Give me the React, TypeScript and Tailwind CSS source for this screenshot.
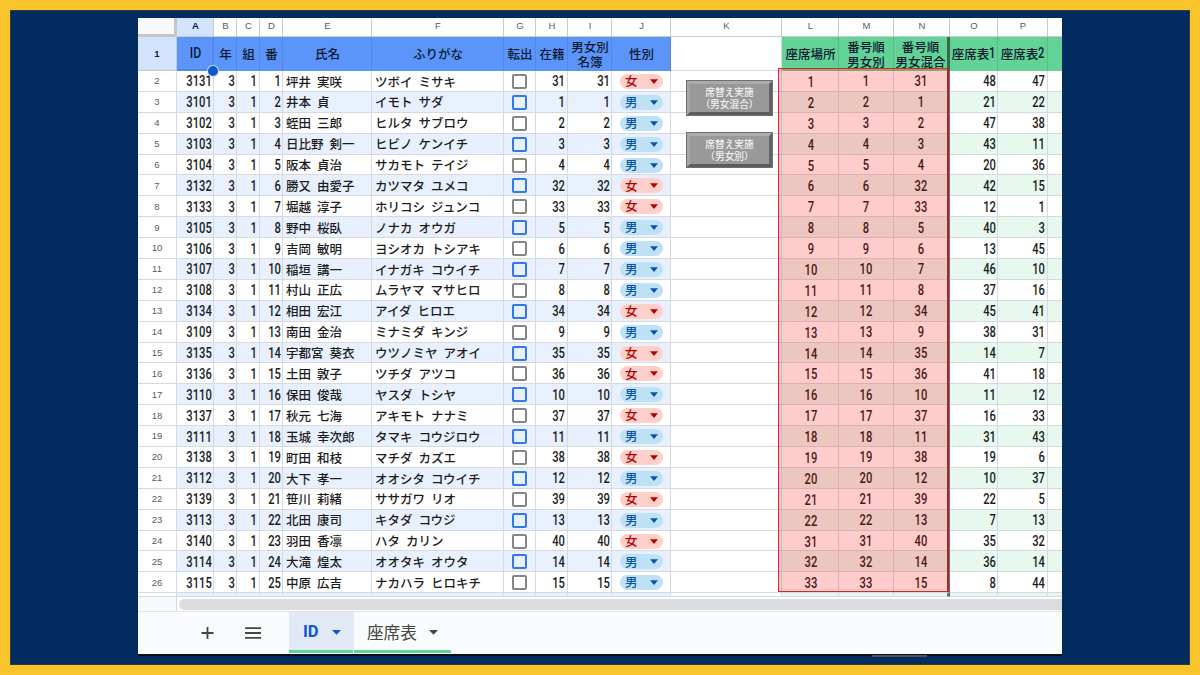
import type { ReactNode } from "react";
import clsx from "clsx";

type Student = [id: number, name: string, kana: string, no: number, sex: "男" | "女", seat1: number, seat2: number];

const STUDENTS: Student[] = [
  [3131, "坪井 実咲", "ツボイ ミサキ", 31, "女", 48, 47],
  [3101, "井本 貞", "イモト サダ", 1, "男", 21, 22],
  [3102, "蛭田 三郎", "ヒルタ サブロウ", 2, "男", 47, 38],
  [3103, "日比野 剣一", "ヒビノ ケンイチ", 3, "男", 43, 11],
  [3104, "阪本 貞治", "サカモト テイジ", 4, "男", 20, 36],
  [3132, "勝又 由愛子", "カツマタ ユメコ", 32, "女", 42, 15],
  [3133, "堀越 淳子", "ホリコシ ジュンコ", 33, "女", 12, 1],
  [3105, "野中 桜臥", "ノナカ オウガ", 5, "男", 40, 3],
  [3106, "吉岡 敏明", "ヨシオカ トシアキ", 6, "男", 13, 45],
  [3107, "稲垣 講一", "イナガキ コウイチ", 7, "男", 46, 10],
  [3108, "村山 正広", "ムラヤマ マサヒロ", 8, "男", 37, 16],
  [3134, "相田 宏江", "アイダ ヒロエ", 34, "女", 45, 41],
  [3109, "南田 金治", "ミナミダ キンジ", 9, "男", 38, 31],
  [3135, "宇都宮 葵衣", "ウツノミヤ アオイ", 35, "女", 14, 7],
  [3136, "土田 敦子", "ツチダ アツコ", 36, "女", 41, 18],
  [3110, "保田 俊哉", "ヤスダ トシヤ", 10, "男", 11, 12],
  [3137, "秋元 七海", "アキモト ナナミ", 37, "女", 16, 33],
  [3111, "玉城 幸次郎", "タマキ コウジロウ", 11, "男", 31, 43],
  [3138, "町田 和枝", "マチダ カズエ", 38, "女", 19, 6],
  [3112, "大下 孝一", "オオシタ コウイチ", 12, "男", 10, 37],
  [3139, "笹川 莉緒", "ササガワ リオ", 39, "女", 22, 5],
  [3113, "北田 康司", "キタダ コウジ", 13, "男", 7, 13],
  [3140, "羽田 香凛", "ハタ カリン", 40, "女", 35, 32],
  [3114, "大滝 煌太", "オオタキ オウタ", 14, "男", 36, 14],
  [3115, "中原 広吉", "ナカハラ ヒロキチ", 15, "男", 8, 44],
];

const COLUMNS = "ABCDEFGHIJKLMNOP".split("");

const GRID =
  "grid grid-cols-[39px_37px_23px_23px_23px_89px_132px_32px_32px_44px_59px_111px_57px_55px_56px_48px_50px_14px]";

// Place number shown in the seat columns; the last seats skip to the 30s
const seatNo = (i: number) => (i < 22 ? i + 1 : i + 9);

function Num({ children, align = "right" }: { children: ReactNode; align?: "right" | "center" | "left" }) {
  return (
    <span
      className={clsx(
        "inline-block scale-x-[0.8] font-['Roboto',sans-serif] text-[14px] font-medium",
        align === "right" && "origin-right",
        align === "center" && "origin-center",
        align === "left" && "-mr-[2px] origin-left"
      )}
    >
      {children}
    </span>
  );
}

function Cell({ children, className }: { children?: ReactNode; className?: string }) {
  return (
    <div className={clsx("flex items-center overflow-hidden border-r border-b border-[#d5d9e0] whitespace-pre", className)}>
      {children}
    </div>
  );
}

function Chip({ sex }: { sex: "男" | "女" }) {
  return (
    <span
      className={clsx(
        "flex h-[15px] w-[43px] items-center justify-between rounded-full px-[5px]",
        sex === "女" ? "bg-[#ffcfc9] text-[#b10202]" : "bg-[#bfe1f6] text-[#0a53a8]"
      )}
    >
      {sex}
      <svg width="8" height="5" viewBox="0 0 8 5" fill="currentColor"><path d="M0 0.2h8L4 4.9z" /></svg>
    </span>
  );
}

function HeaderCell({ children, green, className }: { children?: ReactNode; green?: boolean; className?: string }) {
  return (
    <div
      className={clsx(
        "flex items-center justify-center overflow-hidden border-r text-center leading-[15.5px] whitespace-pre text-[#0b1a30]",
        green ? "border-[#58bd88] bg-[#63d297]" : "border-[#5288e6] bg-[#5b95f9]",
        className
      )}
    >
      {children}
    </div>
  );
}

function BevelButton({ lines }: { lines: [string, string] }) {
  return (
    <button className="flex h-[36px] w-[87px] flex-col items-center justify-center border-4 border-t-[#acacac] border-r-[#636363] border-b-[#5c5c5c] border-l-[#a6a6a6] bg-[#999999] text-[9.7px] leading-[12px] font-medium whitespace-nowrap text-[#f0f0f0] outline-1 -outline-offset-1 outline-[#707070]">
      <span>{lines[0]}</span>
      <span>{lines[1]}</span>
    </button>
  );
}

export default function App() {
  return (
    <div className="h-[675px] w-[1200px] overflow-hidden border-10 border-[#f8c32b] bg-[#022b60] font-['Noto_Sans_CJK_JP',sans-serif] text-[12.5px] font-medium text-[#1c1c1c]">
      <div className="h-full border border-[#2c3a3c] px-[127px] pt-[7px]">
        <div className="relative flex h-[638px] w-[924px] flex-col overflow-hidden border-b-2 border-[#0b0f18] bg-white">
          {/* Column letters */}
          <div className={clsx(GRID, "h-[19px] shrink-0 font-['Liberation_Sans',sans-serif] text-[9.5px] text-[#575b5f]")}>
            <div className="border-r-3 border-b-3 border-[#c4c7c5] bg-[#f8f9fa]" />
            {COLUMNS.map((c) => (
              <div
                key={c}
                className={clsx(
                  "flex items-center justify-center border-r border-b border-[#c8cbce] pb-px pl-px",
                  c === "A" && "bg-[#d3e3fd] font-bold text-[#041e49]"
                )}
              >
                {c}
              </div>
            ))}
            <div className="border-b border-[#c8cbce]" />
          </div>

          {/* Title row */}
          <div className={clsx(GRID, "h-[34px] shrink-0")}>
            <div className="flex items-center justify-center border-r border-b border-[#c4c7c5] bg-[#d3e3fd] pt-[2px] font-['Liberation_Sans',sans-serif] text-[9.5px] font-bold text-[#041e49]">
              1
            </div>
            <HeaderCell className="border-r-2 border-b-2 border-[#1a62d4] pt-[2px] pl-[3px]">
              <span className="inline-block scale-x-[0.88] font-['Roboto',sans-serif] text-[14px]">ID</span>
            </HeaderCell>
            <HeaderCell className="pl-px">年</HeaderCell>
            <HeaderCell className="pl-px">組</HeaderCell>
            <HeaderCell className="pl-px">番</HeaderCell>
            <HeaderCell className="pl-px">氏名</HeaderCell>
            <HeaderCell className="pl-px">ふりがな</HeaderCell>
            <HeaderCell className="pl-px">転出</HeaderCell>
            <HeaderCell className="pl-px">在籍</HeaderCell>
            <HeaderCell className="pl-px">{"男女別\n名簿"}</HeaderCell>
            <HeaderCell className="pl-px">性別</HeaderCell>
            <div className="border-r border-b border-[#d5d9e0]" />
            <HeaderCell green className="pl-px">座席場所</HeaderCell>
            <HeaderCell green>{"番号順\n男女別"}</HeaderCell>
            <HeaderCell green className="border-r-3 border-r-[#37694e]">{"番号順\n男女混合"}</HeaderCell>
            <HeaderCell green>座席表<Num align="left">1</Num></HeaderCell>
            <HeaderCell green>座席表<Num align="left">2</Num></HeaderCell>
            <HeaderCell green className="border-r-0" />
          </div>

          {/* Student rows */}
          <div className="h-[526px] shrink-0 overflow-hidden">
            {STUDENTS.map(([id, name, kana, no, sex, seat1, seat2], i) => {
              const blue = i % 2 === 1 && "bg-[#e8f0fe]";
              const green = i % 2 === 1 && "bg-[#e7f9ef]";
              return (
                <div key={id} className={clsx(GRID, "h-[20.9px]")}>
                  <Cell className="justify-center border-[#c4c7c5] pt-px font-['Liberation_Sans',sans-serif] text-[9.5px] font-normal text-[#575b5f]">{i + 2}</Cell>
                  <Cell className={clsx("justify-end pt-[2px] pr-[1.5px]", blue)}><Num>{id}</Num></Cell>
                  <Cell className={clsx("justify-end pt-[2px] pr-[1.5px]", blue)}><Num>3</Num></Cell>
                  <Cell className={clsx("justify-end pt-[2px] pr-[2px]", blue)}><Num>1</Num></Cell>
                  <Cell className={clsx("justify-end pt-[2px] pr-[1px]", blue)}><Num>{i + 1}</Num></Cell>
                  <Cell className={clsx("pt-[2px] pl-[3px] [word-spacing:3.200px]", blue)}>{name}</Cell>
                  <Cell className={clsx("pt-[2px] pl-[3px] [word-spacing:3.200px]", blue)}>{kana}</Cell>
                  <Cell className={clsx("justify-center pt-[1px]", blue)}>
                    <span className={clsx("size-[15px] rounded-[2px] border-2", blue ? "border-[#3478e8]" : "border-[#868686]")} />
                  </Cell>
                  <Cell className={clsx("justify-end pt-[2px] pr-[2px]", blue)}><Num>{no}</Num></Cell>
                  <Cell className={clsx("justify-end pt-[2px] pr-[1.5px]", blue)}><Num>{no}</Num></Cell>
                  <Cell className={clsx("justify-center pt-[1px] pl-px", blue)}><Chip sex={sex} /></Cell>
                  <Cell />
                  <Cell className={clsx("justify-center pt-[3px] pl-[2px]", green)}><Num align="center">{seatNo(i)}</Num></Cell>
                  <Cell className={clsx("justify-center pt-[2px]", green)}><Num align="center">{seatNo(i)}</Num></Cell>
                  <Cell className={clsx("justify-center border-r-3 border-r-[#6c6f6e] pt-[2px]", green)}><Num align="center">{no}</Num></Cell>
                  <Cell className={clsx("justify-end pt-[2px] pr-[1px]", green)}><Num>{seat1}</Num></Cell>
                  <Cell className={clsx("justify-end pt-[2px] pr-[2px]", green)}><Num>{seat2}</Num></Cell>
                  <Cell className={clsx("border-r-0", green)} />
                </div>
              );
            })}
            {/* Sliver of the next row */}
            <div className={clsx(GRID, "h-[4px]")}>
              <Cell className="border-[#c4c7c5]" />
              {COLUMNS.map((c) => (
                <Cell
                  key={c}
                  className={clsx(
                    c < "K" && "bg-[#e8f0fe]",
                    c > "K" && "bg-[#e7f9ef]",
                    c === "N" && "border-r-3 border-r-[#6c6f6e]"
                  )}
                />
              ))}
              <Cell className="border-r-0 bg-[#e7f9ef]" />
            </div>
          </div>

          {/* Horizontal scrollbar */}
          <div className="flex h-[15px] shrink-0 items-center border-b border-[#e1e3e6]">
            <div className="h-full w-[39px] border-r border-[#d5d7d9] bg-[#f8f9fa]" />
            <div className="ml-[2px] h-[11px] flex-1 rounded-l-full bg-[#dadce0]" />
          </div>

          {/* Sheet tabs */}
          <div className="flex flex-1 bg-[#f9fbfd] text-[#444746]">
            <div className="flex w-[151px] items-center gap-[31px] pl-[63px]">
              <svg width="13" height="12" viewBox="0 0 13 12" stroke="currentColor" strokeWidth="1.8"><path d="M6.5 0v12M0.5 6h12" /></svg>
              <svg width="16" height="12" viewBox="0 0 16 12" stroke="currentColor" strokeWidth="1.8"><path d="M0 1.2h16M0 6h16M0 10.8h16" /></svg>
            </div>
            <div className="flex w-[65px] items-center bg-[#e1e9f7] pb-[1px] pl-[14px] text-[#0b57d0] shadow-[inset_-1px_0_0_#e8eef9,inset_0_-1px_0_#f9fbfd,inset_0_-4px_0_#63d297]">
              <span className="w-[29px] font-['Roboto',sans-serif] text-[16.5px] font-bold">ID</span>
              <svg width="9" height="5" viewBox="0 0 9 5" fill="currentColor"><path d="M0 0h9L4.5 4.8z" /></svg>
            </div>
            <div className="flex w-[97px] items-center pb-[1px] pl-[13px] shadow-[inset_0_-1px_0_#f9fbfd,inset_0_-4px_0_#63d297]">
              <span className="w-[62px] text-[16.6px] font-normal">座席表</span>
              <svg width="9" height="5" viewBox="0 0 9 5" fill="currentColor"><path d="M0 0h9L4.5 4.8z" /></svg>
            </div>
          </div>

          {/* Active cell handle */}
          <div className="absolute top-[47px] left-[69px] size-[12px] rounded-full border border-white/80 bg-[#0b57d0]" />

          {/* Drawings floating over column K */}
          <div className="absolute top-[62px] left-[548px] flex flex-col gap-[16px]">
            <BevelButton lines={["席替え実施", "（男女混合）"]} />
            <BevelButton lines={["席替え実施", "（男女別）"]} />
          </div>

          {/* Highlighted seat range */}
          <div className="absolute top-[50px] left-[640px] h-[524px] w-[171px] border border-r-2 border-[#e32222] border-r-[#a12a2a] bg-[#ff0000]/20" />
        </div>
        <div className="relative -mt-px ml-[734px] h-[2px] w-[55px] bg-[#4a5260]" />
      </div>
    </div>
  );
}
